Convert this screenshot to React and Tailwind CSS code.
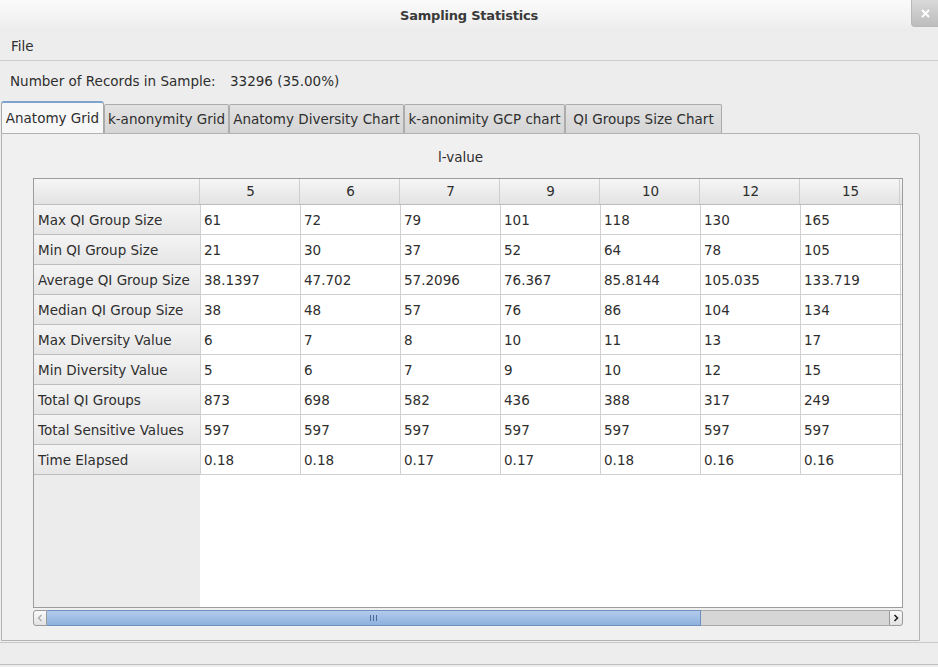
import React from "react";

const cols = ["5", "6", "7", "9", "10", "12", "15"];

const rows = [
  ["Max QI Group Size", "61", "72", "79", "101", "118", "130", "165"],
  ["Min QI Group Size", "21", "30", "37", "52", "64", "78", "105"],
  ["Average QI Group Size", "38.1397", "47.702", "57.2096", "76.367", "85.8144", "105.035", "133.719"],
  ["Median QI Group Size", "38", "48", "57", "76", "86", "104", "134"],
  ["Max Diversity Value", "6", "7", "8", "10", "11", "13", "17"],
  ["Min Diversity Value", "5", "6", "7", "9", "10", "12", "15"],
  ["Total QI Groups", "873", "698", "582", "436", "388", "317", "249"],
  ["Total Sensitive Values", "597", "597", "597", "597", "597", "597", "597"],
  ["Time Elapsed", "0.18", "0.18", "0.17", "0.17", "0.18", "0.16", "0.16"],
];

const tabs = [
  { label: "Anatomy Grid", w: "w-[103px]" },
  { label: "k-anonymity Grid", w: "w-[125px]" },
  { label: "Anatomy Diversity Chart", w: "w-[175px]" },
  { label: "k-anonimity GCP chart", w: "w-[161px]" },
  { label: "QI Groups Size Chart", w: "w-[157px]" },
];

const Tab = ({ label, w, active }) => {
  if (active) {
    return (
      <div
        className={`${w} h-[32px] shrink-0 flex items-center justify-center rounded-t-[3px] border-t-2 border-x border-t-[#7fa3cf] border-x-[#a9a9a9] bg-[#f7f7f7] text-[13.5px] text-[#2e2e2e]`}
      >
        {label}
      </div>
    );
  }
  return (
    <div
      className={`${w} h-[29px] shrink-0 flex items-center justify-center rounded-t-[2px] border border-b-0 border-[#acacac] bg-gradient-to-b from-[#e2e2e2] to-[#d5d5d5] text-[13.5px] text-[#2e2e2e]`}
    >
      {label}
    </div>
  );
};

const App = () => {
  return (
    <div
      className="w-[938px] h-[667px] overflow-hidden flex flex-col bg-[#ededed] text-[#2e2e2e]"
      style={{ fontFamily: '"DejaVu Sans", sans-serif' }}
    >
      {/* title bar */}
      <div className="relative h-[32px] shrink-0 flex items-center justify-center bg-gradient-to-b from-[#fbfbfb] to-[#ececec]">
        <span className="text-[13px] font-bold text-[#3a3a3a] tracking-[-0.2px]">Sampling Statistics</span>
        <div className="absolute right-0 top-0 w-[27px] h-[27px] rounded-bl-[4px] border-l border-b border-[#b8b8b8] bg-gradient-to-b from-[#d9d9d9] to-[#bdbdbd] flex items-center justify-center">
          <svg width="9" height="9" viewBox="0 0 9 9">
            <path d="M1 1 L8 8 M8 1 L1 8" stroke="#fff" strokeWidth="2" />
          </svg>
        </div>
      </div>

      {/* menu */}
      <div className="h-[29px] shrink-0 flex items-center px-[11px] border-b border-[#cfcfcf] text-[13.5px]">
        File
      </div>

      {/* info */}
      <div className="h-[40px] shrink-0 flex items-center px-[10px] text-[13.5px]">
        <span className="w-[220px]">Number of Records in Sample:</span>
        <span>33296 (35.00%)</span>
      </div>

      {/* tabs */}
      <div className="h-[32px] shrink-0 flex items-end pl-[1px]">
        {tabs.map((t, i) => (
          <Tab key={t.label} label={t.label} w={t.w} active={i === 0} />
        ))}
      </div>

      {/* panel */}
      <div className="ml-[1px] w-[919px] h-[508px] shrink-0 border border-[#b3b3b3] rounded-tr-[3px] bg-[#f0f0f0] flex flex-col">
        <div className="h-[44px] shrink-0 flex items-center justify-center text-[13.5px] pt-[2px]">l-value</div>
        <div className="ml-[31px] w-[870px] h-[430px] border border-[#9c9c9c] bg-white flex flex-col overflow-hidden">
          {/* header */}
          <div className="h-[26px] shrink-0 flex border-b border-[#bdbdbd] bg-gradient-to-b from-[#f6f6f6] to-[#e3e3e3]">
            <div className="w-[166px] shrink-0 border-r border-[#cfcfcf]" />
            {cols.map((c) => (
              <div key={c} className="w-[100px] shrink-0 border-r border-[#cfcfcf] flex items-center justify-center text-[13.5px] pl-[2px]">
                {c}
              </div>
            ))}
            <div className="flex-1" />
          </div>
          <div className="flex-1 flex">
            <div className="w-[166px] shrink-0 flex flex-col bg-[#ececec]">
              {rows.map((r) => (
                <div
                  key={r[0]}
                  className="h-[30px] shrink-0 flex items-center px-[4px] pt-[1px] text-[13.5px] border-b border-[#bdbdbd] bg-gradient-to-b from-[#f4f4f4] to-[#e6e6e6]"
                >
                  {r[0]}
                </div>
              ))}
            </div>
            <div className="flex-1 flex flex-col">
              {rows.map((r) => (
                <div key={r[0]} className="h-[30px] shrink-0 flex border-b border-[#d0d0d0]">
                  {r.slice(1).map((v, i) => (
                    <div key={i} className="w-[100px] shrink-0 border-l border-[#d0d0d0] flex items-center px-[3px] pt-[1px] text-[13.5px]">
                      {v}
                    </div>
                  ))}
                  <div className="flex-1 border-l border-[#d0d0d0]" />
                </div>
              ))}
            </div>
          </div>
        </div>
        {/* horizontal scrollbar */}
        <div className="ml-[31px] mt-[2px] w-[870px] h-[16px] flex items-stretch">
          <div className="w-[14px] shrink-0 rounded-l-[3px] border border-[#9a9a9a] bg-gradient-to-b from-[#fafafa] to-[#e2e2e2] flex items-center justify-center">
            <svg width="6" height="8" viewBox="0 0 6 8">
              <path d="M4.5 1 L1.5 4 L4.5 7" fill="none" stroke="#a8a8a8" strokeWidth="1.2" />
            </svg>
          </div>
          <div className="w-[654px] shrink-0 border-y border-r border-[#6e8fbf] bg-gradient-to-b from-[#b2cbec] to-[#8eb1de] flex items-center justify-center">
            <svg width="7" height="6" viewBox="0 0 7 6">
              <path d="M0.5 0 V6 M3.5 0 V6 M6.5 0 V6" stroke="#4b6a98" strokeWidth="1" />
            </svg>
          </div>
          <div className="flex-1 border-y border-[#a9a9a9] bg-[#d6d6d6]" />
          <div className="w-[14px] shrink-0 rounded-r-[3px] border border-[#9a9a9a] bg-gradient-to-b from-[#fafafa] to-[#e2e2e2] flex items-center justify-center">
            <svg width="6" height="8" viewBox="0 0 6 8">
              <path d="M1.5 1 L4.5 4 L1.5 7" fill="none" stroke="#222" strokeWidth="1.6" />
            </svg>
          </div>
        </div>
      </div>

      {/* bottom */}
      <div className="flex-1 border-t border-[#c9c9c9] mt-[1px] relative">
        <div className="absolute bottom-[2px] left-0 right-0 border-b border-[#bdbdbd]" />
      </div>
    </div>
  );
};

export default App;
